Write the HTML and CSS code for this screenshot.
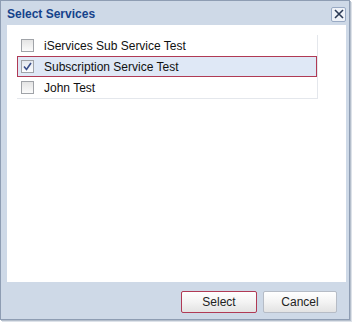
FILE: index.html
```html
<!DOCTYPE html>
<html>
<head>
<meta charset="utf-8">
<link rel="stylesheet" href="styles.css">
</head>
<body>
<div class="window">
  <div class="header">
    <span class="title">Select Services</span>
    <span class="close"><svg width="10" height="10" viewBox="0 0 10 10"><path d="M1 1L9 9M9 1L1 9" stroke="#2b3a55" stroke-width="1.6"/></svg></span>
  </div>
  <div class="body">
    <div class="list">
      <div class="row"><span class="cb"></span><span class="label">iServices Sub Service Test</span></div>
      <div class="row selected"><span class="cb checked"><svg width="9" height="9" viewBox="0 0 9 9"><path d="M1 4.5L3.5 7.5L8 1" fill="none" stroke="#3a4f8a" stroke-width="1.6"/></svg></span><span class="label">Subscription Service Test</span></div>
      <div class="row"><span class="cb"></span><span class="label">John Test</span></div>
    </div>
  </div>
  <div class="footer">
    <button class="btn focus">Select</button>
    <button class="btn">Cancel</button>
  </div>
</div>
</body>
</html>
```
FILE: styles.css
```css
html, body { margin: 0; padding: 0; }
body { width: 352px; height: 322px; background: #fff; font-family: "Liberation Sans", Arial, sans-serif; }
.window {
  box-sizing: border-box;
  width: 350px;
  height: 320px;
  background: #ced9e7;
  border: 1px solid #8e9db3;
  box-shadow: 1px 1px 0 #b5bfcc, 2px 2px 0 #dde2e9;
  display: flex;
  flex-direction: column;
}
.header {
  height: 24px;
  display: flex;
  align-items: center;
  justify-content: space-between;
  padding: 0 3px 0 6px;
}
.title { font-weight: bold; font-size: 12px; color: #15428b; padding-top: 1px; }
.close {
  box-sizing: border-box;
  width: 15px; height: 15px;
  border: 1px solid #99aac4;
  background: #eef2f8;
  border-radius: 2px;
  display: flex; align-items: center; justify-content: center;
  margin-top: 2px;
}
.body {
  margin: 0 3px 0 6px;
  height: 257px;
  background: #fff;
  padding: 10px 0 0 10px;
  box-sizing: border-box;
}
.list {
  width: 301px;
  border-right: 1px solid #e4e7ec;
  border-bottom: 1px solid #e4e7ec;
  box-sizing: border-box;
}
.row {
  height: 21px;
  display: flex;
  align-items: center;
  box-sizing: border-box;
  border: 1px solid transparent;
  font-size: 12px;
  color: #111;
}
.row.selected { background: #dfe8f6; border-color: #b03a55; }
.cb {
  box-sizing: border-box;
  width: 13px; height: 13px;
  margin-left: 3px;
  border: 1px solid #a0a3a8;
  background: linear-gradient(#e4e4e4, #fbfbfb);
  display: flex; align-items: center; justify-content: center;
}
.cb.checked { background: linear-gradient(#e4e8ef, #fbfcfe); }
.label { margin-left: 10px; }
.footer {
  flex: 1;
  display: flex;
  justify-content: flex-end;
  align-items: flex-start;
  gap: 6px;
  padding: 9px 12px 0 0;
}
.btn {
  box-sizing: border-box;
  height: 22px;
  font-family: "Liberation Sans", Arial, sans-serif;
  font-size: 12px;
  color: #222;
  background: linear-gradient(#ffffff, #f3f3f3 50%, #e3e3e3);
  border: 1px solid #b6bcc6;
  border-radius: 2px;
  padding: 0;
}
.btn.focus { width: 76px; border-color: #b03a55; }
.btn:not(.focus) { width: 74px; }
```
